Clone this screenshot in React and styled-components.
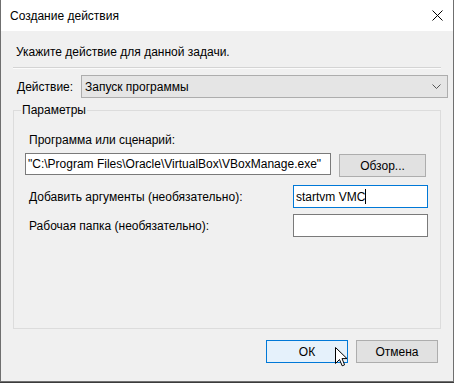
import React from "react";
import styled, { createGlobalStyle } from "styled-components";

const Global = createGlobalStyle`
  html, body {
    margin: 0;
    padding: 0;
    background: #3c3c3c;
  }
  body {
    font-family: "Liberation Sans", Arial, sans-serif;
    font-size: 12px;
    color: #000;
  }
`;

const Window = styled.div`
  position: relative;
  width: 454px;
  height: 382px;
  box-sizing: border-box;
  display: flex;
  flex-direction: column;
  background: #f0f0f0;
  border: 1px solid #6f6f6f;
  border-top: none;
`;

const TitleBar = styled.div`
  height: 31px;
  flex: none;
  display: flex;
  align-items: center;
  justify-content: space-between;
  background: #fff;
  padding: 0 10px 0 9px;
  font-size: 12px;
`;

const Body = styled.div`
  flex: 1;
  display: flex;
  flex-direction: column;
  padding: 13px 5px 0 12px;
`;

const Instruction = styled.div`
  line-height: 16px;
  padding-left: 3px;
`;

const Separator = styled.div`
  height: 1px;
  width: 428px;
  margin-top: 7px;
  background: #d4d4d4;
  border-bottom: 1px solid #fbfbfb;
`;

const ActionRow = styled.div`
  display: flex;
  align-items: center;
  margin-top: 6px;
`;

const Label = styled.span`
  line-height: 16px;
  padding-left: ${(p) => p.$indent || 0}px;
`;

const Select = styled.div`
  margin-left: auto;
  width: 367px;
  height: 23px;
  box-sizing: border-box;
  display: flex;
  align-items: center;
  justify-content: space-between;
  padding: 0 6px 0 3px;
  background: #e5e5e5;
  border: 1px solid #adadad;
`;

const Group = styled.fieldset`
  margin: 4px 0 0;
  width: 428px;
  box-sizing: border-box;
  height: 227px;
  padding: 0 12px 0 11px;
  border: 1px solid #dcdcdc;
  display: flex;
  flex-direction: column;
`;

const Legend = styled.legend`
  padding: 0 1px;
  margin-left: -4px;
  line-height: 16px;
`;

const FieldLabel = styled.div`
  line-height: 16px;
  padding-left: 4px;
  margin-top: 14px;
`;

const PathRow = styled.div`
  display: flex;
  align-items: flex-start;
  gap: 8px;
  margin-top: 5px;
`;

const Input = styled.div`
  width: ${(p) => p.$width}px;
  height: ${(p) => p.$height || 23}px;
  box-sizing: border-box;
  display: flex;
  align-items: center;
  padding-left: 2px;
  background: #fff;
  border: 1px solid ${(p) => (p.$focused ? "#0078d7" : "#7a7a7a")};
  white-space: nowrap;
`;

const Caret = styled.span`
  display: inline-block;
  width: 1px;
  height: 15px;
  background: #000;
  vertical-align: middle;
`;

const Button = styled.div`
  width: ${(p) => p.$width}px;
  height: 23px;
  box-sizing: border-box;
  display: flex;
  align-items: center;
  justify-content: center;
  background: ${(p) => (p.$default ? "#e5f1fb" : "#e1e1e1")};
  border: 1px solid ${(p) => (p.$default ? "#0078d7" : "#adadad")};
`;

const OptionRow = styled.div`
  display: flex;
  align-items: center;
  justify-content: space-between;
  margin-top: ${(p) => p.$gap}px;
`;

const Footer = styled.div`
  display: flex;
  justify-content: flex-end;
  gap: 8px;
  margin-top: 11px;
  padding-right: 10px;
`;

const Pointer = styled.svg`
  position: absolute;
  left: 334px;
  top: 347px;
`;

export default function App() {
  return (
    <>
      <Global />
      <Window>
        <TitleBar>
          <span>Создание действия</span>
          <svg width="11" height="11" viewBox="0 0 11 11">
            <path d="M0.5 0.5L10.5 10.5M10.5 0.5L0.5 10.5" stroke="#000" strokeWidth="1" />
          </svg>
        </TitleBar>
        <Body>
          <Instruction>Укажите действие для данной задачи.</Instruction>
          <Separator />
          <ActionRow>
            <Label $indent={4}>Действие:</Label>
            <Select>
              <span>Запуск программы</span>
              <svg width="9" height="5" viewBox="0 0 9 5">
                <path d="M0.5 0.5L4.5 4.5L8.5 0.5" stroke="#555" fill="none" />
              </svg>
            </Select>
          </ActionRow>
          <Group>
            <Legend>Параметры</Legend>
            <FieldLabel>Программа или сценарий:</FieldLabel>
            <PathRow>
              <Input $width={306} $height={22}>
                "C:\Program Files\Oracle\VirtualBox\VBoxManage.exe"
              </Input>
              <Button $width={87} style={{ marginTop: 1 }}>
                Обзор...
              </Button>
            </PathRow>
            <OptionRow $gap={8}>
              <Label $indent={4}>Добавить аргументы (необязательно):</Label>
              <Input $width={135} $focused>
                startvm VMC
                <Caret />
              </Input>
            </OptionRow>
            <OptionRow $gap={6}>
              <Label $indent={4}>Рабочая папка (необязательно):</Label>
              <Input $width={135} />
            </OptionRow>
          </Group>
          <Footer>
            <Button $width={82} $default>
              ОК
            </Button>
            <Button $width={82}>Отмена</Button>
          </Footer>
        </Body>
        <Pointer width="13" height="20" viewBox="0 0 13 20">
          <path
            d="M0.5 0.5L0.5 16.5L4.5 12.5L7.2 18.8L9.6 17.8L7 11.6L12 11.6Z"
            fill="#fff"
            stroke="#000"
            strokeWidth="1"
            strokeLinejoin="miter"
          />
        </Pointer>
      </Window>
    </>
  );
}
